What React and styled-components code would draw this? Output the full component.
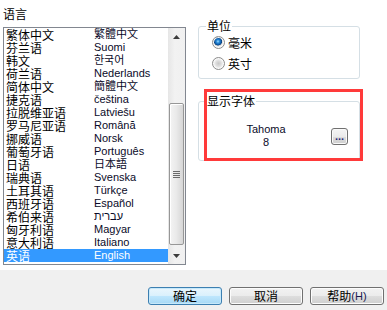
import React from 'react';
import styled, { createGlobalStyle } from 'styled-components';

const Global = createGlobalStyle`
  html, body { margin: 0; padding: 0; background: #fff; }
  body {
    font-family: "Noto Sans CJK SC", "Liberation Sans", sans-serif;
    font-size: 12px;
    color: #000;
  }
`;

const Window = styled.div`
  width: 387px;
  height: 310px;
  display: flex;
  flex-direction: column;
  background: #fff;
  overflow: hidden;
`;

const Main = styled.div`
  height: 270px;
  display: flex;
  padding-left: 3px;
  box-sizing: border-box;
`;

const LeftCol = styled.div`
  width: 183px;
  display: flex;
  flex-direction: column;
  padding-top: 7px;
`;

const Caption = styled.div`
  font: 12px/14px "Noto Sans CJK SC", sans-serif;
  height: 20px;
`;

const ListBox = styled.div`
  height: 238px;
  border: 1px solid #828790;
  box-sizing: border-box;
  display: flex;
`;

const Rows = styled.div`
  flex: 1;
  display: flex;
  flex-direction: column;
`;

const Row = styled.div`
  height: 13px;
  display: grid;
  grid-template-columns: 88px 1fr;
  align-items: center;
  padding-left: 2px;
  background: ${p => (p.$selected ? '#3399ff' : 'transparent')};
  color: ${p => (p.$selected ? '#fff' : '#000')};
  white-space: nowrap;
`;

const Zh = styled.span`
  font: 12px/13px "Noto Sans CJK SC", sans-serif;
`;

const Native = styled.span`
  font: 11px/13px "Liberation Sans", "Noto Sans CJK SC", "DejaVu Sans", sans-serif;
  color: ${p => (p.$selected ? '#fff' : '#0a0a28')};
`;

const ScrollBar = styled.div`
  width: 17px;
  display: flex;
  flex-direction: column;
  background: linear-gradient(to right, #e6e6e6, #f2f2f2 40%, #f0f0f0);
`;

const ArrowBtn = styled.div`
  height: 17px;
  display: flex;
  align-items: center;
  justify-content: center;
`;

const Track = styled.div`
  flex: 1;
  display: flex;
  flex-direction: column;
`;

const Thumb = styled.div`
  margin-top: ${p => p.$offset}px;
  height: ${p => p.$size}px;
  margin-left: 1px;
  width: 15px;
  box-sizing: border-box;
  border: 1px solid #979797;
  border-radius: 2px;
  background: linear-gradient(to right, #f4f4f4, #e9e9e9 50%, #d6d6d6);
  box-shadow: inset 1px 1px 0 #fff;
  display: flex;
  align-items: center;
  justify-content: center;
`;

const RightCol = styled.div`
  position: relative;
  margin-left: 12px;
  width: 162px;
  padding-top: 19px;
  display: flex;
  flex-direction: column;
  gap: 15px;
`;

const Group = styled.fieldset`
  margin: 0;
  padding: 0;
  min-width: 0;
  border: 1px solid #d5dfe5;
  border-radius: 3px;
  height: ${p => p.$h}px;
  box-sizing: border-box;
`;

const Legend = styled.legend`
  font: 12px/14px "Noto Sans CJK SC", sans-serif;
  padding: 0 1px;
  margin-left: 7px;
`;

const RadioList = styled.div`
  display: flex;
  flex-direction: column;
  gap: 8px;
  padding: 3px 0 0 13px;
`;

const RadioRow = styled.label`
  display: flex;
  align-items: center;
  gap: 3px;
  height: 13px;
  font: 12px/13px "Noto Sans CJK SC", sans-serif;
`;

const Radio = styled.span`
  width: 13px;
  height: 13px;
  border-radius: 50%;
  box-sizing: border-box;
  border: 1px solid #8c8c8c;
  background: ${p =>
    p.$checked
      ? 'radial-gradient(circle at 45% 40%, #9fe0ff 0, #2a8ad8 1.6px, #0d5aa8 3.2px, #0a3f7a 3.8px, #d8d8d8 4.4px, #f4f4f4 5.5px)'
      : 'radial-gradient(circle at 50% 50%, #c9c9c9 0, #dcdcdc 2.5px, #ececec 4px, #f7f7f7 5.5px)'};
  box-shadow: inset 0 0 0 1px #fafafa;
`;

const FontRow = styled.div`
  display: flex;
  align-items: center;
  padding: 15px 11px 0 0;
`;

const FontText = styled.div`
  flex: 1;
  text-align: center;
  font: 11px/13px "Liberation Sans", sans-serif;
  color: #0a0a28;
  padding-left: 2px;
`;

const DotsBtn = styled.button`
  width: 17px;
  height: 17px;
  padding: 0 0 3px;
  border: 1px solid #707070;
  border-radius: 3px;
  background: linear-gradient(#f4f4f4, #ebebeb 50%, #dddddd 51%, #cfcfcf);
  box-shadow: inset 0 0 0 1px #fafafa;
  font: bold 11px/10px "Liberation Sans", sans-serif;
  color: #2a2a7a;
  display: flex;
  align-items: flex-end;
  justify-content: center;
  box-sizing: border-box;
`;

const Highlight = styled.div`
  position: absolute;
  left: 6px;
  top: 89px;
  width: 159px;
  height: 72px;
  border: 3px solid #ff3a3a;
  box-sizing: border-box;
  pointer-events: none;
`;

const Footer = styled.div`
  height: 40px;
  background: #f0f0f0;
  display: flex;
  justify-content: flex-end;
  align-items: flex-start;
  gap: 7px;
  padding: 17px 3px 0 0;
  box-sizing: border-box;
`;

const Button = styled.button`
  width: 74px;
  height: 18px;
  padding: 0;
  box-sizing: border-box;
  border: 1px solid ${p => (p.$default ? '#3c7fb1' : '#707070')};
  border-radius: 3px;
  background: ${p =>
    p.$default
      ? 'linear-gradient(#eaf6fd, #d9f0fc 50%, #bee6fd 51%, #a7d9f5)'
      : 'linear-gradient(#f2f2f2, #ebebeb 50%, #dddddd 51%, #cfcfcf)'};
  box-shadow: inset 0 0 0 1px ${p => (p.$default ? '#c6e8fa' : '#fcfcfc')};
  font: 12px/16px "Noto Sans CJK SC", sans-serif;
  color: #000;
  display: flex;
  align-items: center;
  justify-content: center;
`;

const Accel = styled.span`
  font: 11px "Liberation Sans", sans-serif;
  color: #1a1a50;
`;

const languages = [
  ['繁体中文', '繁體中文'],
  ['芬兰语', 'Suomi'],
  ['韩文', '한국어'],
  ['荷兰语', 'Nederlands'],
  ['简体中文', '簡體中文'],
  ['捷克语', 'čeština'],
  ['拉脱维亚语', 'Latviešu'],
  ['罗马尼亚语', 'Română'],
  ['挪威语', 'Norsk'],
  ['葡萄牙语', 'Português'],
  ['日语', '日本語'],
  ['瑞典语', 'Svenska'],
  ['土耳其语', 'Türkçe'],
  ['西班牙语', 'Español'],
  ['希伯来语', 'עברית'],
  ['匈牙利语', 'Magyar'],
  ['意大利语', 'Italiano'],
  ['英语', 'English'],
];

const UpArrow = () => (
  <svg width="7" height="4" viewBox="0 0 7 4">
    <path d="M3.5 0 L7 4 L0 4 Z" fill="#3c3c3c" />
  </svg>
);

const DownArrow = () => (
  <svg width="7" height="4" viewBox="0 0 7 4">
    <path d="M0 0 L7 0 L3.5 4 Z" fill="#3c3c3c" />
  </svg>
);

const Grip = () => (
  <svg width="7" height="7" viewBox="0 0 7 7">
    <path d="M0 0.5 H7 M0 2.5 H7 M0 4.5 H7 M0 6.5 H7" stroke="#6a6a6a" strokeWidth="1" />
  </svg>
);

export default function App() {
  return (
    <>
      <Global />
      <Window>
        <Main>
          <LeftCol>
            <Caption>语言</Caption>
            <ListBox>
              <Rows>
                {languages.map(([zh, native], i) => {
                  const sel = i === languages.length - 1;
                  return (
                    <Row key={zh} $selected={sel}>
                      <Zh>{zh}</Zh>
                      <Native $selected={sel}>{native}</Native>
                    </Row>
                  );
                })}
              </Rows>
              <ScrollBar>
                <ArrowBtn><UpArrow /></ArrowBtn>
                <Track>
                  <Thumb $offset={58} $size={142}><Grip /></Thumb>
                </Track>
                <ArrowBtn><DownArrow /></ArrowBtn>
              </ScrollBar>
            </ListBox>
          </LeftCol>
          <RightCol>
            <Group $h={60}>
              <Legend>单位</Legend>
              <RadioList>
                <RadioRow><Radio $checked />毫米</RadioRow>
                <RadioRow><Radio />英寸</RadioRow>
              </RadioList>
            </Group>
            <Group $h={67}>
              <Legend>显示字体</Legend>
              <FontRow>
                <FontText>Tahoma<br />8</FontText>
                <DotsBtn>...</DotsBtn>
              </FontRow>
            </Group>
            <Highlight />
          </RightCol>
        </Main>
        <Footer>
          <Button $default>确定</Button>
          <Button>取消</Button>
          <Button>帮助<Accel>(H)</Accel></Button>
        </Footer>
      </Window>
    </>
  );
}
